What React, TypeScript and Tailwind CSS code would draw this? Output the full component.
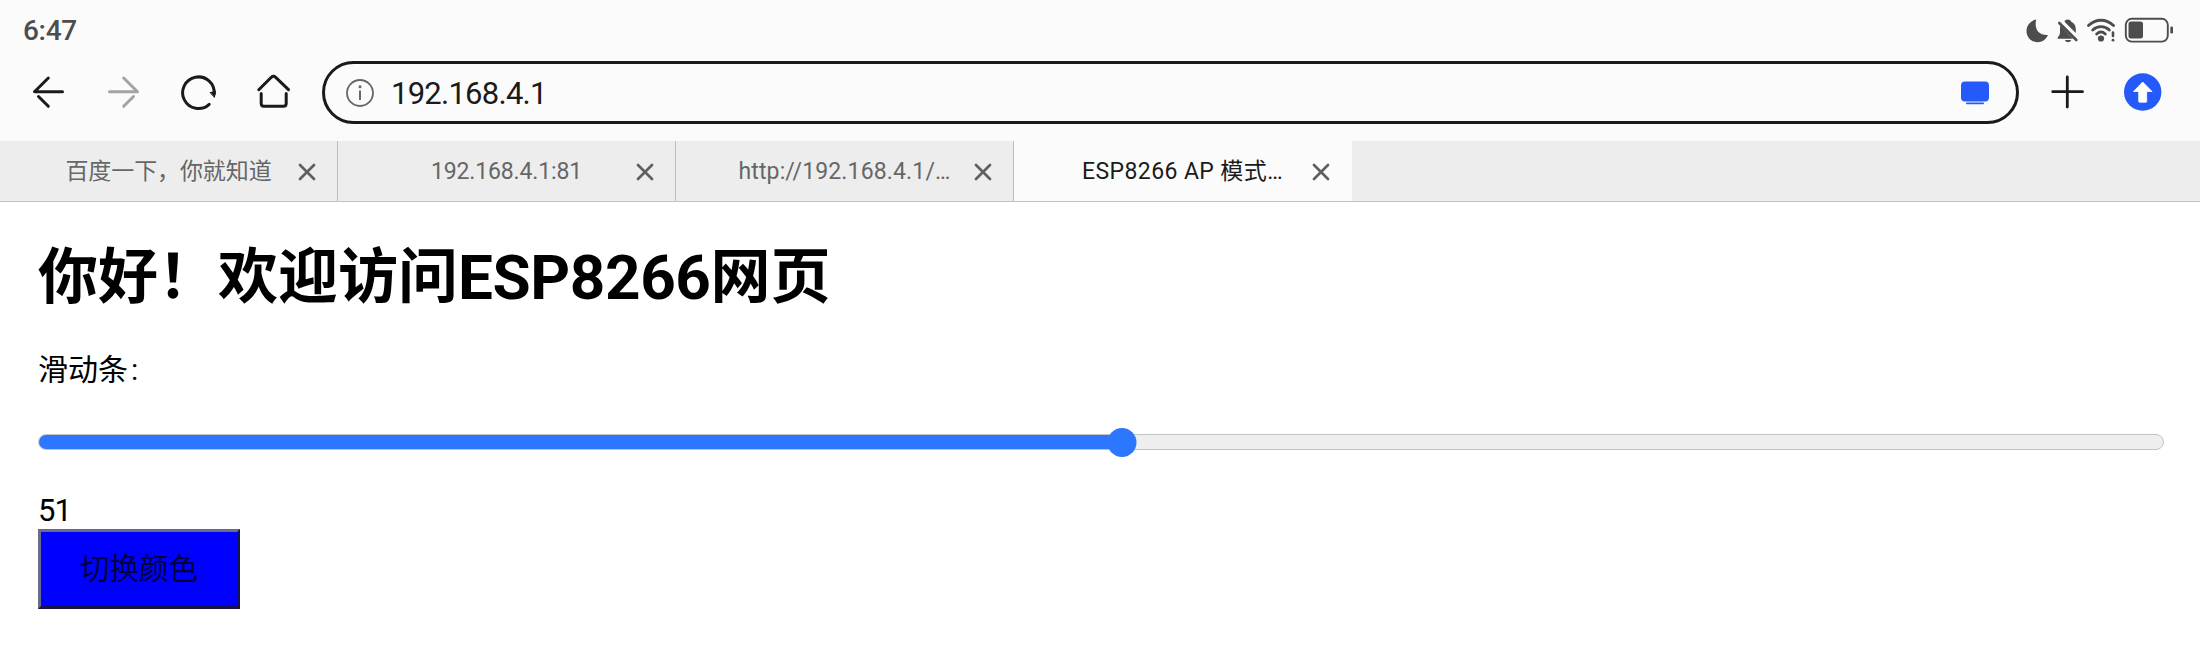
import { useState } from "react";

const FONT = "font-[Roboto,'Noto_Sans_CJK_SC',sans-serif]";

function CloseIcon() {
  return (
    <svg width="18" height="18" viewBox="0 0 18 18" fill="none" stroke="#5f5f5f" strokeWidth="2.7" strokeLinecap="round">
      <path d="M2 2L16 16M16 2L2 16" />
    </svg>
  );
}

function StatusBar() {
  return (
    <div className="flex h-[61px] items-center justify-between pl-[23px] pr-[26px]">
      <span className="text-[28px] font-medium leading-[34px] tracking-[-0.3px] text-[#4d4d4d]">6:47</span>
      <svg className="mb-[2px]" width="150" height="30" viewBox="2024 15 150 30">
        <path d="M2036.2 19.6 C2034 29 2038.5 35.5 2048 35 C2045.5 40 2042 42.200 2037.500 42.200 C2031 42.200 2026.500 37 2026.500 31 C2026.500 25.500 2030.500 20.500 2036.200 19.600Z" fill="#4d4d4d" />
        <g fill="#4d4d4d">
          <path d="M2064.500 21.800 C2065 20.300 2066 19.600 2067.800 19.600 C2069.500 19.600 2070.500 20.300 2071 21.500 C2074.500 23 2075.800 26 2075.800 29.500 V33 Z" />
          <path d="M2060.300 25.600 L2073 38.800 H2059 C2057.500 38.800 2057.300 37.800 2058 37 C2059.600 35.300 2060 34 2060 31.500 C2060 29 2060 27 2060.300 25.600Z" />
          <path d="M2065 40 H2071.200 C2070.200 43 2066 43 2065 40Z" />
        </g>
        <path d="M2059.300 23L2076.300 40" stroke="#4d4d4d" strokeWidth="2.600" strokeLinecap="round" />
        <g fill="none" stroke="#4d4d4d" strokeWidth="2.900" strokeLinecap="round">
          <path d="M2088.500 25.500C2096 18.500 2106 18.500 2113.500 25.500" />
          <path d="M2092.700 30C2097.500 25.500 2104.500 25.500 2109.300 30" />
          <path d="M2096.700 34C2099.500 31.500 2102.500 31.500 2105.300 34" />
          <path d="M2113 32.500V36" strokeWidth="2.600" />
        </g>
        <circle cx="2101" cy="38.500" r="3.100" fill="#4d4d4d" />
        <circle cx="2113" cy="40.200" r="1.400" fill="#4d4d4d" />
        <rect x="2125.800" y="18.800" width="42" height="22.800" rx="6" fill="none" stroke="#4d4d4d" strokeWidth="1.900" />
        <rect x="2128.500" y="21.500" width="14.500" height="17" rx="2.500" fill="#4d4d4d" />
        <rect x="2170.300" y="26.500" width="2.700" height="7" rx="1.200" fill="#4d4d4d" />
      </svg>
    </div>
  );
}

function Toolbar() {
  return (
    <div className="flex h-[80px] items-start">
      <svg className="mt-[9px] shrink-0" width="322" height="44" viewBox="0 70 322 44" fill="none" stroke="#1a1a1a" strokeWidth="3" strokeLinecap="round" strokeLinejoin="round">
        <path d="M48.300 78L34.500 91.700H62.500" />
        <path d="M38.500 96.500L48.300 106.300" />
        <path d="M123.700 78L137.500 91.700H109.500" stroke="#a3a3a3" />
        <path d="M133.500 96.500L123.700 106.300" stroke="#a3a3a3" />
        <path d="M209.200 104.300A15.800 15.800 0 1 1 214.200 94" />
        <path d="M210.500 92.500L215.500 91.500L214.500 97Z" fill="#1a1a1a" strokeWidth="1" />
        <path d="M258.800 89.700L271.300 77.300Q273.500 75.300 275.700 77.300L288.500 89.700" />
        <path d="M261.200 93.500V103.500Q261.200 106.200 263.900 106.200H283.500Q286.200 106.200 286.200 103.500V93.500" />
      </svg>
      <div className="flex h-[63px] w-[1697px] shrink-0 items-center justify-between rounded-full border-[3px] border-[#1a1a1a] pl-[20px] pr-[26px]">
        <div className="flex items-center">
          <svg width="30" height="30" viewBox="0 0 30 30" fill="none" stroke="#666" strokeWidth="1.800">
            <circle cx="15" cy="15" r="13" />
            <path d="M15 12.500V22" strokeWidth="2" />
            <circle cx="15" cy="8.800" r="1.500" fill="#666" stroke="none" />
          </svg>
          <span className="ml-[16px] pt-[2px] text-[31px] leading-[36px] tracking-[-0.75px] text-[#1a1a1a]">192.168.4.1</span>
        </div>
        <svg width="30" height="26" viewBox="0 0 30 26" fill="#2459fa">
          <rect x="1" y="1.500" width="28" height="20" rx="4" />
          <rect x="6" y="22.500" width="18" height="1.700" rx="0.800" />
        </svg>
      </div>
      <svg className="mt-[9px] shrink-0" width="181" height="44" viewBox="2019 70 181 44">
        <path d="M2052.700 91.700H2082.500M2067.300 77V107" stroke="#1a1a1a" strokeWidth="2.800" strokeLinecap="round" />
        <circle cx="2142.700" cy="92" r="18.700" fill="#2459fa" />
        <path d="M2142.700 82L2152 91.500H2146.700V101.500Q2146.700 102.200 2146 102.200H2139.500Q2138.700 102.200 2138.700 101.500V91.500H2133.500Z" fill="#fff" stroke="#fff" strokeWidth="0.800" strokeLinejoin="round" />
      </svg>
    </div>
  );
}

const tabs = [
  { title: "百度一下，你就知道", style: "text-[#666] border-[#bdbdbd]", label: "tracking-[-0.1px]" },
  { title: "192.168.4.1:81", style: "text-[#666] border-[#bdbdbd]", label: "tracking-[-0.15px]" },
  { title: "http://192.168.4.1/…", style: "text-[#666] border-[#bdbdbd]", label: "tracking-[0.15px]" },
  { title: "ESP8266 AP 模式…", style: "bg-[#fbfbfb] text-[#1a1a1a] border-transparent", label: "tracking-[0.4px]" },
];

function TabStrip() {
  return (
    <div className="flex h-[61px] border-b border-[#c2c2c2] bg-[#ededed]">
      {tabs.map((tab) => (
        <div key={tab.title} className={`grid w-[338px] grid-cols-[62px_1fr_62px] items-center border-r pt-[2px] ${tab.style}`}>
          <span />
          <span className={`whitespace-nowrap text-center text-[23px] leading-[30px] ${tab.label}`}>{tab.title}</span>
          <button className="flex justify-center pl-[2px]" aria-label="关闭">
            <CloseIcon />
          </button>
        </div>
      ))}
    </div>
  );
}

export default function App() {
  const [value, setValue] = useState(51);
  return (
    <div className={`h-[656px] w-[2200px] overflow-hidden bg-white ${FONT}`}>
      <header className="bg-[#fbfbfb]">
        <StatusBar />
        <Toolbar />
        <TabStrip />
      </header>
      <main className="flex flex-col items-start pl-[38px] text-black">
        <h1 className="mt-[36px] flex h-[80px] items-center whitespace-nowrap text-[60px] font-bold leading-[80px]">
          你好！欢迎访问<span className="text-[62px] tracking-[-0.4px]">ESP8266</span>网页
        </h1>
        <p className="mt-[32px] text-[30px] leading-[40px]">
          滑动条<span className="ml-[3px]">:</span>
        </p>
        <label className="relative mt-[37px] flex h-[30px] w-[2126px] items-center">
          <span className="flex h-[16px] w-full overflow-hidden rounded-full border border-[#c4c4c4] bg-[#eee]">
            <span className="-my-px -ml-px h-[16px] bg-[#2d77fe]" style={{ width: `${value}%` }} />
          </span>
          <span
            className="absolute top-[0.5px] size-[29px] -translate-x-1/2 rounded-full bg-[#2d77fe]"
            style={{ left: `calc(14.5px + (100% - 29px) * ${value / 100})` }}
          />
          <input
            type="range"
            min={0}
            max={100}
            value={value}
            onChange={(e) => setValue(Number(e.target.value))}
            className="absolute inset-0 w-full opacity-0"
          />
        </label>
        <span className="mt-[35px] text-[31px] leading-[37px] tracking-[-0.8px]">{value}</span>
        <button className="h-[80px] w-[202px] border-[3px] border-b-[#14144a] border-l-[#6b6b8e] border-r-[#14144a] border-t-[#6b6b8e] bg-[#0000ff] text-[29.5px] leading-[40px] text-[#00003c]">
          切换颜色
        </button>
      </main>
    </div>
  );
}
